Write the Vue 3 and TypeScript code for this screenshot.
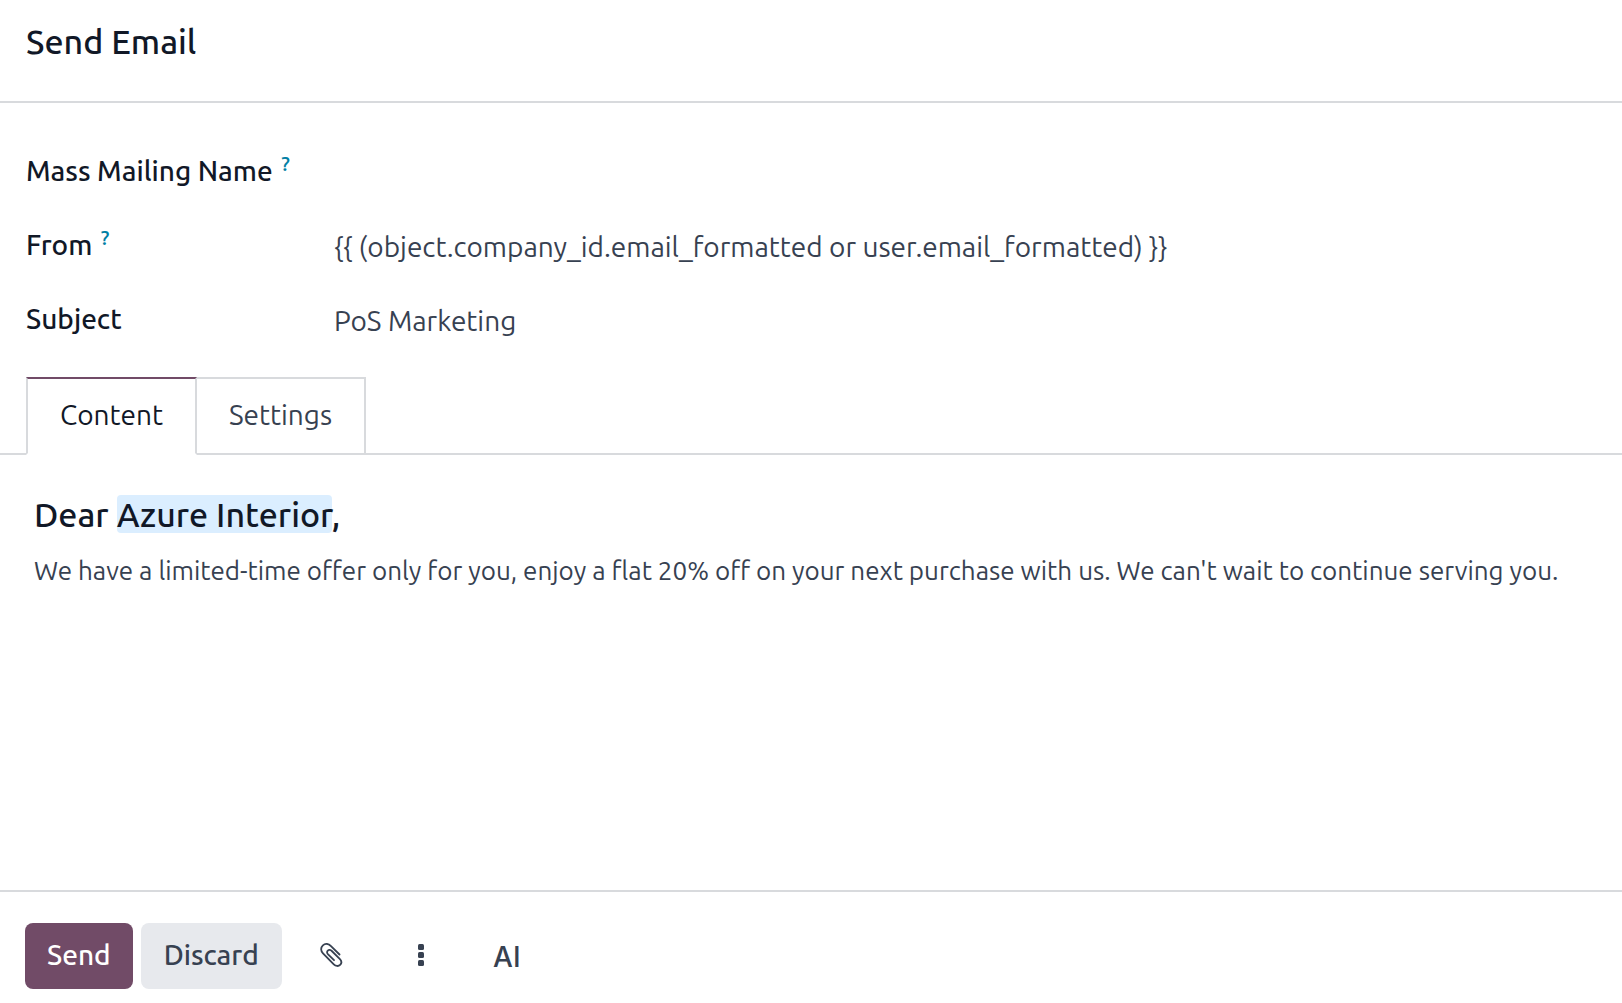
<script setup lang="ts">
import { ref } from 'vue'

const mailingName = ref('')
const from = ref('{{ (object.company_id.email_formatted or user.email_formatted) }}')
const subject = ref('PoS Marketing')
const tabs = ['Content', 'Settings'] as const
const activeTab = ref<(typeof tabs)[number]>('Content')
</script>

<template>
  <form class="composer" @submit.prevent>
    <header class="header">
      <h1 class="title">Send Email</h1>
    </header>

    <main class="body">
      <div class="fields">
        <div class="field">
          <label class="label" for="mailing-name">Mass Mailing Name <sup class="help">?</sup></label>
          <input id="mailing-name" v-model="mailingName" class="input" type="text" />
        </div>
        <div class="field">
          <label class="label" for="from">From <sup class="help">?</sup></label>
          <input id="from" v-model="from" class="input" type="text" />
        </div>
        <div class="field">
          <label class="label" for="subject">Subject</label>
          <input id="subject" v-model="subject" class="input" type="text" />
        </div>
      </div>

      <div class="tabs" role="tablist">
        <button
          v-for="tab in tabs"
          :key="tab"
          type="button"
          role="tab"
          class="tab"
          :class="{ active: tab === activeTab }"
          :aria-selected="tab === activeTab"
          @click="activeTab = tab"
        >
          {{ tab }}
        </button>
      </div>

      <section v-if="activeTab === 'Content'" class="message" role="tabpanel">
        <h2 class="greeting">Dear <span class="placeholder">Azure Interior</span>,</h2>
        <p class="text">
          We have a limited-time offer only for you, enjoy a flat 20% off on your next purchase with us. We can't wait
          to continue serving you.
        </p>
      </section>
    </main>

    <footer class="footer">
      <button type="submit" class="btn primary">Send</button>
      <button type="button" class="btn secondary">Discard</button>
      <button type="button" class="btn icon" aria-label="Attach files">
        <svg width="24" height="26" viewBox="0 0 24 26" fill="none" stroke="currentColor" stroke-width="1.8" stroke-linecap="round">
          <path d="M20.5 12.5 12 4.1C9.600 1.700 6.200 1.200 3.900 3.300C1.500 5.600 1.600 8.800 4 11.300L14.800 22.300C16.700 24.200 19.400 24.600 21.100 22.900C22.800 21.200 22.500 18.700 20.700 16.900L12.800 9C11.600 7.800 9.900 7.500 8.800 8.600C7.700 9.700 7.900 11.200 9.100 12.400L15 18.200" />
        </svg>
      </button>
      <button type="button" class="btn icon" aria-label="More actions">
        <svg width="24" height="24" viewBox="0 0 24 24" fill="currentColor">
          <rect x="9" y="1" width="6" height="6" rx="1.5" />
          <rect x="9" y="9" width="6" height="6" rx="1.5" />
          <rect x="9" y="17" width="6" height="6" rx="1.5" />
        </svg>
      </button>
      <button type="button" class="btn icon ai">AI</button>
    </footer>
  </form>
</template>

<style>
body {
  margin: 0;
  background: #fff;
}
</style>

<style scoped>
.composer {
  display: flex;
  flex-direction: column;
  min-height: 100vh;
  font-family: Ubuntu, 'Noto Sans', sans-serif;
  font-size: 28px;
  line-height: 40px;
  color: #374151;
}
.header {
  padding: 17px 26px 36px;
  border-bottom: 2px solid #d8dadd;
}
.title,
.greeting {
  margin: 0;
  font-size: 34px;
  line-height: 48px;
  font-weight: 500;
  color: #111827;
}
.body {
  flex: 1;
}
.fields {
  display: flex;
  flex-direction: column;
  gap: 34px;
  padding: 48px 26px 38px;
}
.field {
  display: flex;
  align-items: center;
}
.label {
  width: 308px;
  flex: none;
  font-weight: 500;
  color: #111827;
  white-space: nowrap;
}
.help {
  margin-left: 2px;
  font-size: 21px;
  line-height: 0;
  color: #0180a5;
}
.input {
  flex: 1;
  min-width: 0;
  height: 40px;
  padding: 4px 0 0;
  box-sizing: border-box;
  border: 0;
  outline: 0;
  background: none;
  font: inherit;
  color: inherit;
}
.tabs {
  display: flex;
  padding-left: 26px;
  box-shadow: inset 0 -2px #d8dadd;
}
.tab {
  padding: 16px 32px 18px;
  border: 2px solid #d8dadd;
  background: #fff;
  font: inherit;
  color: inherit;
}
.tab + .tab {
  border-left: 0;
}
.tab.active {
  border-top-color: #714b67;
  border-bottom-color: #fff;
  color: #111827;
}
.message {
  padding: 35px 34px;
}
.placeholder {
  border-radius: 4px;
  background: #dbeeff;
}
.text {
  margin: 13px 0 0;
  font-size: 26px;
  line-height: 40px;
}
.footer {
  display: flex;
  gap: 8px;
  padding: 31px 25px 14px;
  border-top: 2px solid #d8dadd;
}
.btn {
  display: flex;
  align-items: center;
  justify-content: center;
  height: 66px;
  padding: 0 22px 2px;
  border: 0;
  border-radius: 8px;
  background: none;
  font: inherit;
  font-weight: 500;
  color: #374151;
}
.primary {
  background: #714b67;
  color: #fff;
}
.secondary {
  padding: 0 23px 2px;
  background: #e7e9ed;
}
.icon {
  width: 82px;
}
.ai {
  width: 74px;
  padding: 2px 22px 0;
  font-family: Inter, sans-serif;
}
</style>
